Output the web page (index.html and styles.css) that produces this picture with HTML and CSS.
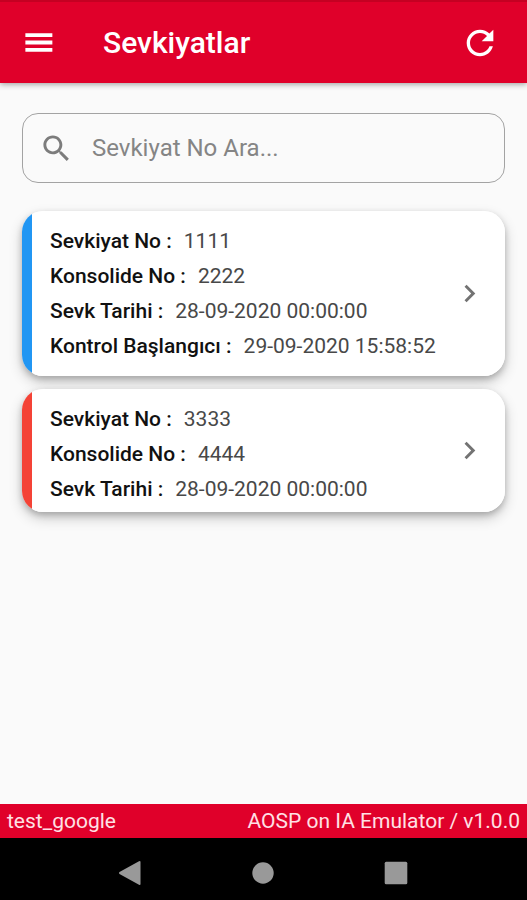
FILE: index.html
```
<!DOCTYPE html>
<html lang="tr">
<head>
<meta charset="utf-8">
<meta name="viewport" content="width=device-width, initial-scale=1">
<title>Sevkiyatlar</title>
<link rel="stylesheet" href="styles.css">
</head>
<body>
<header class="app-bar">
  <button class="icon-button" type="button" aria-label="Menü">
    <svg class="icon" viewBox="0 0 24 24"><path d="M3 18.300h18.500v-2.500H3v2.500zm0-5h18.500v-2.600H3v2.600zm0-7.600v2.500h18.500V5.700H3z"/></svg>
  </button>
  <h1 class="title">Sevkiyatlar</h1>
  <button class="icon-button" type="button" aria-label="Yenile">
    <svg class="icon icon-large" viewBox="0 0 24 24"><path d="M17.65 6.35C16.2 4.9 14.21 4 12 4c-4.42 0-7.99 3.58-7.99 8s3.57 8 7.99 8c3.73 0 6.84-2.55 7.73-6h-2.08c-.82 2.33-3.04 4-5.65 4-3.31 0-6-2.69-6-6s2.69-6 6-6c1.66 0 3.14.69 4.22 1.78L13 11h7V4l-2.35 2.35z"/></svg>
  </button>
</header>
<main class="content">
  <label class="search">
    <svg class="icon" viewBox="0 0 24 24"><path d="M15.5 14h-.79l-.28-.27C15.41 12.59 16 11.11 16 9.5 16 5.91 13.09 3 9.5 3S3 5.91 3 9.5 5.91 16 9.5 16c1.61 0 3.09-.59 4.23-1.57l.27.28v.79l5 4.99L20.49 19l-4.99-5zm-6 0C7.01 14 5 11.99 5 9.5S7.01 5 9.5 5 14 7.01 14 9.5 11.99 14 9.5 14z"/></svg>
    <input class="search-input" type="text" placeholder="Sevkiyat No Ara..." aria-label="Sevkiyat No Ara">
  </label>
  <div class="list">
    <a class="card card-started" href="#1111">
      <dl class="fields">
        <div class="field"><dt>Sevkiyat No :</dt><dd>1111</dd></div>
        <div class="field"><dt>Konsolide No :</dt><dd>2222</dd></div>
        <div class="field"><dt>Sevk Tarihi :</dt><dd>28-09-2020 00:00:00</dd></div>
        <div class="field"><dt>Kontrol Başlangıcı :</dt><dd>29-09-2020 15:58:52</dd></div>
      </dl>
      <svg class="icon" viewBox="0 0 24 24"><path d="M10 6L8.59 7.41 13.17 12l-4.58 4.59L10 18l6-6z"/></svg>
    </a>
    <a class="card card-waiting" href="#3333">
      <dl class="fields">
        <div class="field"><dt>Sevkiyat No :</dt><dd>3333</dd></div>
        <div class="field"><dt>Konsolide No :</dt><dd>4444</dd></div>
        <div class="field"><dt>Sevk Tarihi :</dt><dd>28-09-2020 00:00:00</dd></div>
      </dl>
      <svg class="icon" viewBox="0 0 24 24"><path d="M10 6L8.59 7.41 13.17 12l-4.58 4.59L10 18l6-6z"/></svg>
    </a>
  </div>
</main>
<footer class="status">
  <span>test_google</span>
  <span>AOSP on IA Emulator / v1.0.0</span>
</footer>
<nav class="system-nav" aria-label="Sistem">
  <button class="nav-button" type="button" aria-label="Geri"><svg class="nav-icon" viewBox="0 0 24 24"><path d="M22.500 1v22q0 1.500-1.500.7L1.500 13q-1-1 0-2L21 .3q1.500-.8 1.500.7z"/></svg></button>
  <button class="nav-button" type="button" aria-label="Ana ekran"><svg class="nav-icon" viewBox="0 0 24 24"><circle cx="12" cy="12" r="10.700"/></svg></button>
  <button class="nav-button" type="button" aria-label="Son uygulamalar"><svg class="nav-icon" viewBox="0 0 24 24"><rect x=".7" y=".7" width="22.600" height="22.600" rx="1.500"/></svg></button>
</nav>
</body>
</html>
```
FILE: styles.css
```
* {
  box-sizing: border-box;
}

body {
  display: flex;
  flex-direction: column;
  min-height: 100vh;
  margin: 0;
  background: #fafafa;
  color: #111;
  font-family: Roboto, "Liberation Sans", sans-serif;
  font-size: 21px;
}

button {
  padding: 0;
  border: 0;
  background: none;
  color: inherit;
}

.icon {
  display: block;
  flex: none;
  width: 35px;
  height: 35px;
  fill: currentColor;
}

.icon-large {
  width: 40px;
  height: 40px;
}

.app-bar {
  display: flex;
  align-items: center;
  height: 83px;
  padding: 0 27px 0 21px;
  border-top: 2px solid #c50022;
  background: #e0002a;
  color: #fff;
  box-shadow: 0 1px 6px rgba(0, 0, 0, 0.4);
}

.title {
  flex: 1;
  margin: 0 0 0 47px;
  font-size: 30px;
  font-weight: 500;
}

.content {
  flex: 1;
  padding: 30px 22px;
}

.search {
  display: flex;
  align-items: center;
  gap: 18px;
  height: 70px;
  padding: 0 16px;
  border: 1px solid #a3a3a3;
  border-radius: 16px;
  color: #7c7c7c;
}

.search-input {
  flex: 1;
  min-width: 0;
  padding: 0;
  border: 0;
  outline: 0;
  background: none;
  color: #333;
  font: inherit;
  font-size: 24px;
}

.search-input::placeholder {
  color: #858585;
  opacity: 1;
}

.list {
  display: flex;
  flex-direction: column;
  gap: 13px;
  margin-top: 28px;
}

.card {
  display: flex;
  align-items: center;
  justify-content: space-between;
  padding: 0 18px;
  border-radius: 21px;
  background: linear-gradient(to right, var(--state) 10px, #fff 10px);
  color: inherit;
  text-decoration: none;
  box-shadow: 0 6px 14px rgba(0, 0, 0, 0.2), 0 3px 6px rgba(0, 0, 0, 0.2);
}

.card .icon {
  color: #737373;
}

.card-started {
  --state: #2196f3;
}

.card-waiting {
  --state: #f44336;
}

.fields {
  margin: 0;
  padding: 13px 0 12px 10px;
}

.card-waiting .fields {
  padding-bottom: 5px;
}

.field {
  display: flex;
  gap: 12px;
  line-height: 35px;
}

.field dt {
  font-weight: 500;
}

.field dd {
  margin: 0;
  color: #484848;
}

.status {
  display: flex;
  justify-content: space-between;
  padding: 0 7px;
  background: #e0002a;
  color: #ffe0e5;
  line-height: 34px;
}

.system-nav {
  display: flex;
  justify-content: center;
  gap: 109px;
  padding: 23px 2px 15px 0;
  background: #000;
}

.nav-icon {
  display: block;
  width: 24px;
  height: 24px;
  fill: #999;
}
```
